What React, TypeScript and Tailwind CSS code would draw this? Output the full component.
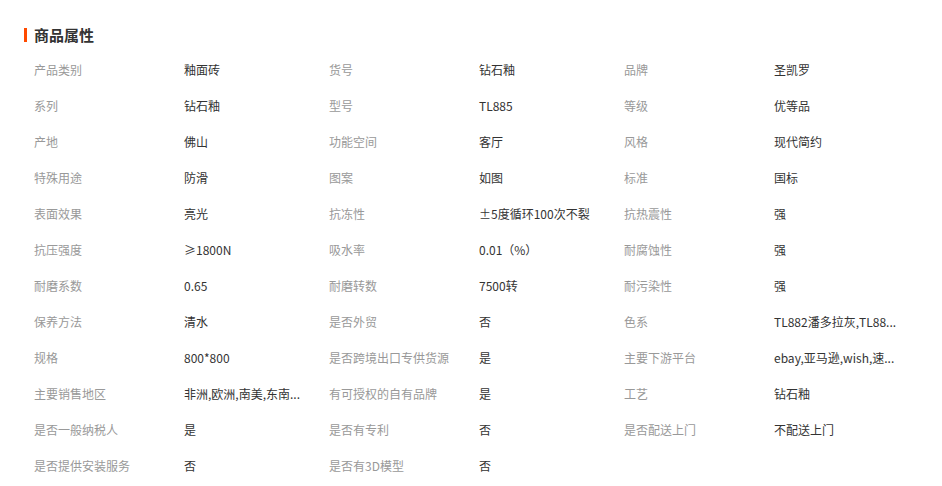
const attrs: [string, string][] = [
  ['产品类别', '釉面砖'],
  ['货号', '钻石釉'],
  ['品牌', '圣凯罗'],
  ['系列', '钻石釉'],
  ['型号', 'TL885'],
  ['等级', '优等品'],
  ['产地', '佛山'],
  ['功能空间', '客厅'],
  ['风格', '现代简约'],
  ['特殊用途', '防滑'],
  ['图案', '如图'],
  ['标准', '国标'],
  ['表面效果', '亮光'],
  ['抗冻性', '±5度循环100次不裂'],
  ['抗热震性', '强'],
  ['抗压强度', '≥1800N'],
  ['吸水率', '0.01（%）'],
  ['耐腐蚀性', '强'],
  ['耐磨系数', '0.65'],
  ['耐磨转数', '7500转'],
  ['耐污染性', '强'],
  ['保养方法', '清水'],
  ['是否外贸', '否'],
  ['色系', 'TL882潘多拉灰,TL88...'],
  ['规格', '800*800'],
  ['是否跨境出口专供货源', '是'],
  ['主要下游平台', 'ebay,亚马逊,wish,速...'],
  ['主要销售地区', '非洲,欧洲,南美,东南...'],
  ['有可授权的自有品牌', '是'],
  ['工艺', '钻石釉'],
  ['是否一般纳税人', '是'],
  ['是否有专利', '否'],
  ['是否配送上门', '不配送上门'],
  ['是否提供安装服务', '否'],
  ['是否有3D模型', '否'],
]

export default function App() {
  return (
    <div
      className="min-h-screen bg-white pl-[24px] pt-[18px]"
      style={{ fontFamily: '"Noto Sans CJK SC", "Liberation Sans", sans-serif' }}
    >
      <div className="flex h-[34px] items-center">
        <span className="h-[14px] w-[3px] bg-[#ff4a00]" />
        <h2 className="ml-[7px] text-[15px] font-bold text-[#333]">商品属性</h2>
      </div>
      <div className="ml-[10px] grid grid-cols-[150px_145px_150px_145px_150px_145px]">
        {attrs.map(([label, value]) => (
          <div key={label} className="contents">
            <div className="flex h-9 items-center text-[12px] text-[#999]">{label}</div>
            <div className="flex h-9 items-center whitespace-nowrap text-[12px] text-[#333]">{value}</div>
          </div>
        ))}
      </div>
    </div>
  )
}
